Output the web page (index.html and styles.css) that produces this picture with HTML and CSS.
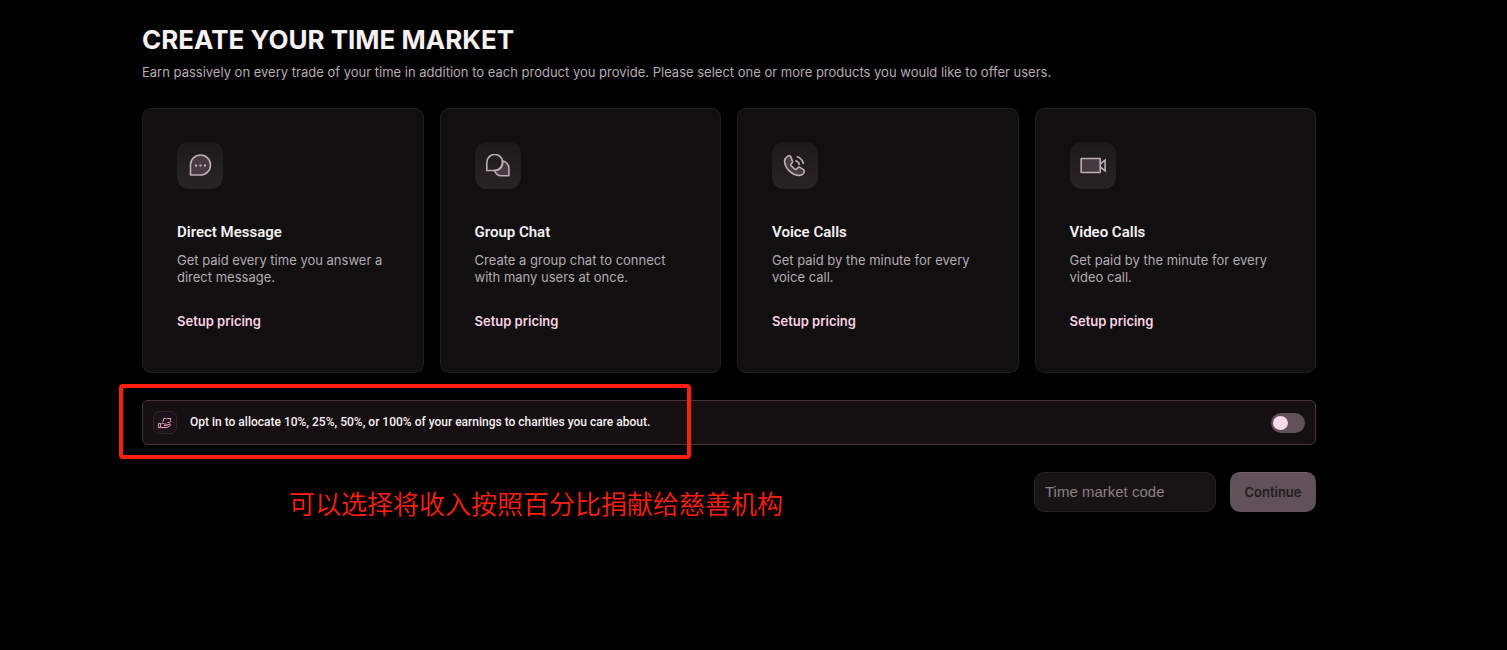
FILE: index.html
```html
<!DOCTYPE html>
<html lang="en">
<head>
<meta charset="utf-8">
<meta name="viewport" content="width=device-width, initial-scale=1">
<title>Create your time market</title>
<link rel="stylesheet" href="styles.css">
</head>
<body>
<main class="page">
  <header class="intro">
    <h1 class="title">CREATE YOUR TIME MARKET</h1>
    <p class="subtitle">Earn passively on every trade of your time in addition to each product you provide. Please select one or more products you would like to offer users.</p>
  </header>

  <section class="products">
    <article class="card">
      <div class="card-icon">
        <svg viewBox="0 0 24 24" width="24" height="24"><path class="tint" d="M2.500 21V11A10 10 0 1 1 12.500 21Z"/><path class="dots" d="M7 11.500h2M11.500 11.500h2M16 11.500h2"/></svg>
      </div>
      <h2 class="card-title">Direct Message</h2>
      <p class="card-text">Get paid every time you answer a direct message.</p>
      <a class="card-link" href="#">Setup pricing</a>
    </article>
    <article class="card">
      <div class="card-icon">
        <svg viewBox="0 0 24 24" width="24" height="24"><path class="tint" d="M16.200 6.700A7.600 7.600 0 0 1 22.900 14.300V21.800H15.500A7.600 7.600 0 0 1 8.500 16.500H9A8 8 0 0 0 16.200 6.700Z"/><path class="line" d="M.8 16.500V8.500A8 8 0 1 1 8.800 16.500Z"/></svg>
      </div>
      <h2 class="card-title">Group Chat</h2>
      <p class="card-text">Create a group chat to connect with many users at once.</p>
      <a class="card-link" href="#">Setup pricing</a>
    </article>
    <article class="card">
      <div class="card-icon">
        <svg viewBox="0 0 24 24" width="24" height="24"><path class="tint" d="M6.300 1.800C5.500 1.800 1.600 3.300 1.600 7 1.600 14.200 9.100 21.400 16.300 21.400c3.300 0 5-2.400 5-4.400 0-.7-.3-1-.8-1.400l-3.700-2.200c-.7-.4-1.300-.3-1.800.2l-1.600 1.600c-.5.400-1 .4-1.500 0-1.500-1-2.800-2.400-3.900-4-.3-.5-.2-1 .2-1.400l1-1.100c.4-.5.5-1 .2-1.600L7.700 2.600c-.3-.5-.8-.8-1.400-.8Z"/><path class="line" d="M12.300 6.500a6 6 0 0 1 4.200 4.600M13.700 2.600a10 10 0 0 1 6.800 7.400"/></svg>
      </div>
      <h2 class="card-title">Voice Calls</h2>
      <p class="card-text">Get paid by the minute for every voice call.</p>
      <a class="card-link" href="#">Setup pricing</a>
    </article>
    <article class="card">
      <div class="card-icon">
        <svg viewBox="0 0 26 24" width="26" height="24"><path class="tint" d="M1.200 4.500h19v14H1.200Z"/><path class="line" d="M20.200 10l4.900-3.800v10.600L20.200 13"/></svg>
      </div>
      <h2 class="card-title">Video Calls</h2>
      <p class="card-text">Get paid by the minute for every video call.</p>
      <a class="card-link" href="#">Setup pricing</a>
    </article>
  </section>

  <section class="charity">
    <span class="charity-icon">
      <svg viewBox="0 0 14 12" width="14" height="12"><path d="M.6 6.400h2v4.200h-2ZM2.600 7.200C4 6 5 6.200 6.200 7H8c1.200.1 1 1.600 0 1.600H6M9 8.200l2.700-1.100c1.200-.3 1.600.7.700 1.300L9 10.600H2.600M4.900 5.200l.8-3.700h2l.9.700 1-.7h3.200l-.5 1.700.5 1.300-1.200 1H9.500"/></svg>
    </span>
    <label class="charity-label" for="charity-toggle">Opt in to allocate 10%, 25%, 50%, or 100% of your earnings to charities you care about.</label>
    <input class="toggle" type="checkbox" role="switch" id="charity-toggle">
    <div class="highlight"></div>
    <p class="note" lang="zh-CN">可以选择将收入按照百分比捐献给慈善机构</p>
  </section>

  <form class="actions">
    <input class="code" type="text" placeholder="Time market code" aria-label="Time market code">
    <button class="continue" type="button">Continue</button>
  </form>
</main>
</body>
</html>
```
FILE: styles.css
```css
* { box-sizing: border-box; }

body {
  margin: 0;
  background: #000;
  color: #f7f1f4;
  font-family: Inter, "Liberation Sans", sans-serif;
}

h1, h2, p { margin: 0; }

.page { padding: 24px 191px 24px 142px; }

.title {
  font-size: 26px;
  line-height: 32px;
  font-weight: 700;
}

.subtitle {
  margin-top: 6px;
  font-size: 13px;
  line-height: 20px;
  color: #b5abb0;
}

.products {
  display: grid;
  grid-template-columns: repeat(4, 1fr);
  gap: 16px;
  margin-top: 26px;
}

.card {
  display: flex;
  flex-direction: column;
  align-items: flex-start;
  padding: 33px 34px 41px;
  border: 1px solid #211f20;
  border-radius: 9px;
  background: #110f10;
}

.card-icon {
  display: grid;
  place-items: center;
  width: 46px;
  height: 47px;
  border-radius: 12px;
  background: linear-gradient(#1d191b, #292325);
}

svg { display: block; fill: none; }
.tint { fill: #453b40; stroke: #bfacb5; stroke-width: 1.600; stroke-linejoin: round; }
.line { stroke: #bfacb5; stroke-width: 1.600; }
.dots { stroke: #cdbac3; stroke-width: 2; }

.card-title {
  margin-top: 33px;
  font-family: Roboto, "Liberation Sans", sans-serif;
  font-size: 15px;
  line-height: 20px;
  font-weight: 600;
}

.card-text {
  margin-top: 10px;
  font-size: 13px;
  line-height: 17px;
  color: #b5abb0;
}

.card-link {
  margin-top: 25px;
  font-size: 13px;
  line-height: 20px;
  font-weight: 600;
  color: #fdd3e5;
  text-decoration: none;
}

.charity {
  position: relative;
  display: flex;
  align-items: center;
  gap: 13px;
  margin-top: 27px;
  padding: 10px;
  border: 1px solid #48353c;
  border-radius: 6px;
  background: #160f12;
}

.charity-icon {
  display: grid;
  place-items: center;
  width: 24px;
  height: 23px;
  border: 1px solid #30232b;
  border-radius: 6px;
  background: #1c1219;
  stroke: #ef9cc6;
}

.charity-label {
  flex: 1;
  font-family: Roboto, "Liberation Sans", sans-serif;
  font-size: 12px;
  line-height: 21px;
  font-weight: 500;
}

.toggle {
  appearance: none;
  display: flex;
  align-items: center;
  width: 34px;
  height: 20px;
  margin: 0;
  padding: 2px;
  border-radius: 10px;
  background: #615158;
}

.toggle::before {
  content: "";
  width: 15px;
  height: 14px;
  border-radius: 50%;
  background: #fdd8e8;
}

.toggle:checked { justify-content: flex-end; }

.highlight {
  position: absolute;
  top: -17px;
  left: -24px;
  width: 572px;
  height: 75px;
  border: 4px solid #ff1f12;
  border-radius: 4px;
  pointer-events: none;
}

.note {
  position: absolute;
  top: 83px;
  left: 146px;
  font-family: "Noto Sans CJK SC", sans-serif;
  font-size: 26px;
  line-height: 38px;
  font-weight: 350;
  color: #ff1f12;
  white-space: nowrap;
}

.actions {
  display: flex;
  justify-content: flex-end;
  gap: 14px;
  margin-top: 27px;
}

.code, .continue {
  height: 40px;
  border-radius: 10px;
  font-family: inherit;
}

.code {
  width: 182px;
  padding: 0 10px 2px;
  border: 1px solid #252123;
  background: #181415;
  color: #f7f1f4;
  font-family: "Liberation Sans", Arial, sans-serif;
  font-size: 15px;
}

.code::placeholder { color: #8c7f86; opacity: 1; }

.continue {
  min-width: 86px;
  padding: 0 14px 2px;
  border: 0;
  border-top: 1px solid #76636b;
  background: #615158;
  color: #231d20;
  font-size: 13px;
  font-weight: 600;
}
```
